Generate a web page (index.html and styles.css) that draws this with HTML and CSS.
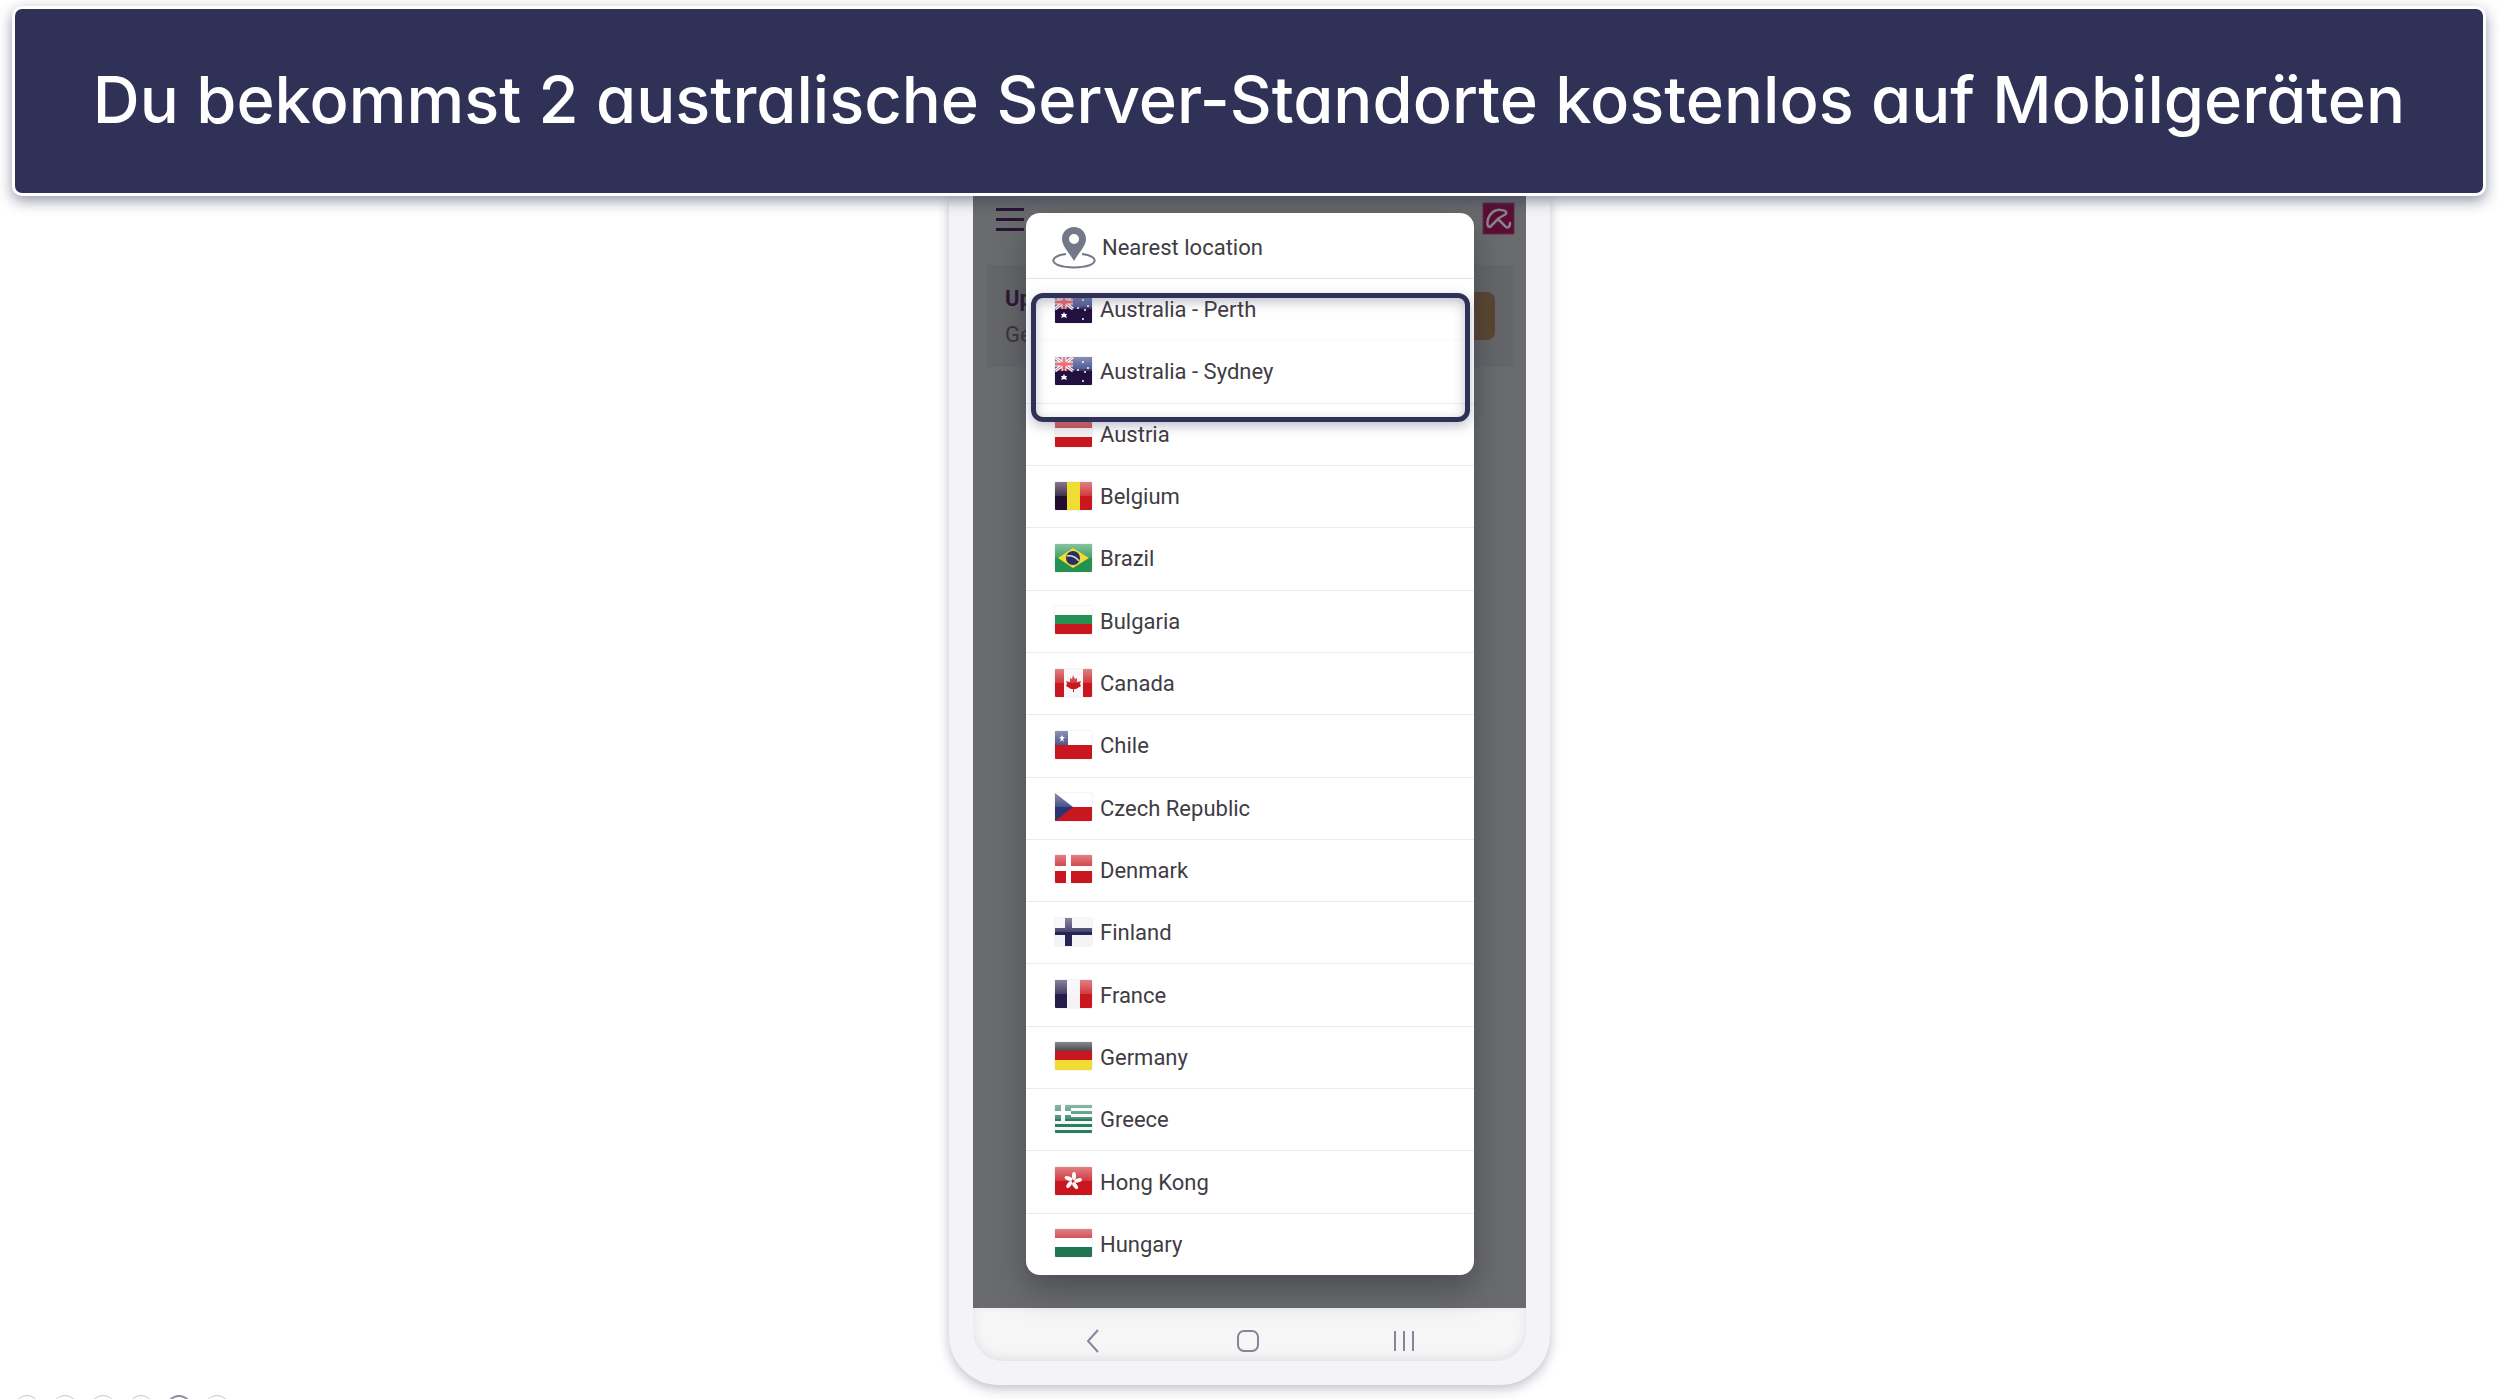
FILE: index.html
```html
<!DOCTYPE html>
<html lang="de">
<head>
    <meta charset="UTF-8">
    <meta name="viewport" content="width=device-width, initial-scale=1.0">
    <title>Server-Standorte</title>
    <link rel="stylesheet" href="styles.css">
</head>
<body>
    <!-- Banner -->
    <header class="banner">
        <h1>Du bekommst 2 australische Server-Standorte kostenlos auf Mobilgeräten</h1>
    </header>

    <!-- Phone -->
    <main class="phone">
        <div class="screen">
            <div class="app-bar">
                <button class="menu-button" aria-label="Menu"><span></span><span></span><span></span></button>
                <svg class="umbrella" viewBox="0 0 33 33" aria-hidden="true">
                    <rect x="1" y="1" width="31" height="31" fill="#5c0c35" stroke="#5b3340"/>
                    <path d="M8 25 C5 25 5 21 6 17 C8 11 13 7 19 8 C23 8 25 10 24 12 L17 16 L8 25 M16 17 L22 23 C25 27 28 26 28 21" fill="none" stroke="#85868a" stroke-width="2.500" stroke-linejoin="round" stroke-linecap="round"/>
                </svg>
            </div>
            <div class="upgrade">
                <div>
                    <strong>Upgrade</strong>
                    <p>Get Pro</p>
                </div>
                <button class="upgrade-button" aria-label="Upgrade"></button>
            </div>

            <!-- Location list -->
            <section class="locations">
                <button class="nearest">
                    <svg class="pin" viewBox="0 0 44 42" aria-hidden="true">
                        <path d="M14 27 C-4 29 -4 40 22 40.500 C48 40 48 29 30 27" fill="none" stroke="#757888" stroke-width="2"/>
                        <path fill-rule="evenodd" d="M22 0 C15 0 10 5 10 12 C10 19 16 24 22 34 C28 24 34 19 34 12 C34 5 29 0 22 0 Z M22 7 A5 5 0 1 1 22 17 A5 5 0 1 1 22 7 Z" fill="#757888"/>
                    </svg>
                    Nearest location
                </button>
                <ul class="country-list">
                    <li><button><svg class="flag" viewBox="0 0 37 28"><use href="#flag-au"/><rect width="37" height="14" fill="url(#gloss)"/></svg>Australia - Perth</button></li>
                    <li><button><svg class="flag" viewBox="0 0 37 28"><use href="#flag-au"/><rect width="37" height="14" fill="url(#gloss)"/></svg>Australia - Sydney</button></li>
                    <li><button><svg class="flag" viewBox="0 0 37 28"><path fill="#c8171e" d="M0 0h37v28H0z"/><path fill="#f2f2f4" d="M0 9h37v9H0z"/><rect width="37" height="14" fill="url(#gloss)"/></svg>Austria</button></li>
                    <li><button><svg class="flag" viewBox="0 0 37 28"><path fill="#220d30" d="M0 0h12v28H0z"/><path fill="#c8171e" d="M25 0h12v28H25z"/><rect width="37" height="14" fill="url(#gloss)"/><path fill="#f0dc32" d="M12 0h13v28H12z"/></svg>Belgium</button></li>
                    <li><button><svg class="flag" viewBox="0 0 37 28"><path fill="#23914f" d="M0 0h37v28H0z"/><rect width="37" height="14" fill="url(#gloss)"/><path fill="#f0dc32" d="M3 14 18 4l16 10-16 10z"/><circle cx="18" cy="14" r="7" fill="#2b2f60"/><path d="M12 12q7-1 12 5" fill="none" stroke="#d8dae4" stroke-width="1.500"/></svg>Brazil</button></li>
                    <li><button><svg class="flag" viewBox="0 0 37 28"><path fill="#fff" d="M0 0h37v9H0z"/><path fill="#23914f" d="M0 9h37v9H0z"/><path fill="#c8171e" d="M0 18h37v10H0z"/></svg>Bulgaria</button></li>
                    <li><button><svg class="flag" viewBox="0 0 37 28"><path fill="#f6f6f8" d="M0 0h37v28H0z"/><path fill="#c8171e" d="M0 0h9v28H0zM28 0h9v28h-9zM18 6l2 4 2-1v4l4-1-1 3 1 2-5 3h-2v3h-1v-3h-2l-5-3 1-2-1-3 4 1V9l2 1z"/><rect width="37" height="14" fill="url(#gloss)"/></svg>Canada</button></li>
                    <li><button><svg class="flag" viewBox="0 0 37 28"><path fill="#fff" d="M0 0h37v14H0z"/><path fill="#c8171e" d="M0 14h37v14H0z"/><path fill="#2c3a7a" d="M0 0h13v14H0z"/><rect width="37" height="14" fill="url(#gloss)"/><path fill="#fff" d="m7 4 1 2h2L8 8l1 3-2-2-2 2 1-3-2-2h2z"/></svg>Chile</button></li>
                    <li><button><svg class="flag" viewBox="0 0 37 28"><path fill="#fff" d="M0 0h37v14H0z"/><path fill="#c8171e" d="M0 14h37v14H0z"/><path fill="#2b3474" d="m0 0 18 14L0 28z"/><rect width="37" height="14" fill="url(#gloss)"/></svg>Czech Republic</button></li>
                    <li><button><svg class="flag" viewBox="0 0 37 28"><path fill="#c8171e" d="M0 0h37v28H0z"/><path fill="#fff" d="M11 0h5v28h-5zM0 11h37v5H0z"/><rect width="37" height="14" fill="url(#gloss)"/></svg>Denmark</button></li>
                    <li><button><svg class="flag" viewBox="0 0 37 28"><path fill="#f4f4f7" d="M0 0h37v28H0z"/><path fill="#262456" d="M10 0h7v28h-7zM0 10h37v7H0z"/><rect width="37" height="14" fill="url(#gloss)"/></svg>Finland</button></li>
                    <li><button><svg class="flag" viewBox="0 0 37 28"><path fill="#241c4a" d="M0 0h12v28H0z"/><path fill="#f4f4f7" d="M12 0h13v28H12z"/><path fill="#c8171e" d="M25 0h12v28H25z"/><rect width="37" height="14" fill="url(#gloss)"/></svg>France</button></li>
                    <li><button><svg class="flag" viewBox="0 0 37 28"><path fill="#2a2a30" d="M0 0h37v9H0z"/><path fill="#c8171e" d="M0 9h37v9H0z"/><path fill="#f0dc32" d="M0 18h37v10H0z"/><rect width="37" height="9" fill="url(#gloss)"/></svg>Germany</button></li>
                    <li><button><svg class="flag" viewBox="0 0 37 28"><path fill="#f6f8f8" d="M0 0h37v28H0z"/><path fill="#2a7d60" d="M0 0h37v3H0zM0 6h37v3H0zM0 12h37v4H0zM0 19h37v3H0zM0 25h37v3H0zM0 0h16v16H0z"/><path fill="#fff" d="M6 0h4v16H6zM0 6h16v4H0z"/><rect width="37" height="14" fill="url(#gloss)"/></svg>Greece</button></li>
                    <li><button><svg class="flag" viewBox="0 0 37 28"><path fill="#c8171e" d="M0 0h37v28H0z"/><rect width="37" height="14" fill="url(#gloss)"/><g fill="#fff"><ellipse cx="19" cy="9" rx="2" ry="4"/><ellipse cx="19" cy="9" rx="2" ry="4" transform="rotate(72 18 14)"/><ellipse cx="19" cy="9" rx="2" ry="4" transform="rotate(144 18 14)"/><ellipse cx="19" cy="9" rx="2" ry="4" transform="rotate(216 18 14)"/><ellipse cx="19" cy="9" rx="2" ry="4" transform="rotate(288 18 14)"/></g></svg>Hong Kong</button></li>
                    <li><button><svg class="flag" viewBox="0 0 37 28"><path fill="#c8171e" d="M0 0h37v9H0z"/><path fill="#fff" d="M0 9h37v9H0z"/><path fill="#217553" d="M0 18h37v10H0z"/><rect width="37" height="14" fill="url(#gloss)"/></svg>Hungary</button></li>
                </ul>
                <div class="highlight"></div>
            </section>
        </div>

        <!-- Android buttons -->
        <nav class="nav-bar">
            <button aria-label="Back"><svg viewBox="0 0 24 24"><path d="M17 1 7 12l10 11"/></svg></button>
            <button aria-label="Home"><svg viewBox="0 0 24 24"><rect x="2" y="2" width="20" height="20" rx="6"/></svg></button>
            <button aria-label="Recents"><svg viewBox="0 0 24 24"><path d="M3 2v20M12 2v20M21 2v20"/></svg></button>
        </nav>
    </main>

    <!-- Slider dots -->
    <footer class="dots">
        <button aria-label="1"></button>
        <button aria-label="2"></button>
        <button aria-label="3"></button>
        <button aria-label="4"></button>
        <button class="active" aria-label="5"></button>
        <button aria-label="6"></button>
    </footer>

    <!-- Shared flag parts -->
    <svg class="defs" aria-hidden="true">
        <defs>
            <linearGradient id="gloss" x1="0" y1="0" x2="0" y2="1">
                <stop offset="0" stop-color="#fff" stop-opacity="0.45"/>
                <stop offset="1" stop-color="#fff" stop-opacity="0.15"/>
            </linearGradient>
            <g id="flag-au">
                <path fill="#221040" d="M0 0h37v28H0z"/>
                <path fill="#24357e" d="M0 0h37v12H0z"/>
                <path stroke="#fff" stroke-width="3" d="m0 0 18 14M18 0 0 14"/>
                <path stroke="#fff" stroke-width="5" d="M9 0v14M0 7h18"/>
                <path stroke="#e0303a" stroke-width="1" d="m0 0 18 14M18 0 0 14"/>
                <path stroke="#e0303a" stroke-width="3" d="M9 0v14M0 7h18"/>
                <path fill="#fff" d="m9 17 1 2h2l-1 2 1 2-3-1-3 1 1-2-1-2h2z"/>
                <circle cx="28" cy="5" r="1" fill="#fff"/>
                <circle cx="23" cy="13" r="1" fill="#fff"/>
                <circle cx="33" cy="11" r="1" fill="#fff"/>
                <circle cx="30" cy="15" r="1" fill="#fff"/>
                <circle cx="28" cy="24" r="1" fill="#fff"/>
            </g>
        </defs>
    </svg>
</body>
</html>
```
FILE: styles.css
```css
* {
    margin: 0;
    padding: 0;
    box-sizing: border-box;
}

body {
    display: flex;
    flex-direction: column;
    height: 100vh;
    overflow: hidden;
    font-family: Roboto, sans-serif;
    font-size: 22px;
    color: #403c44;
    background: #fff;
}

button {
    font: inherit;
    color: inherit;
    border: none;
    background: none;
    cursor: pointer;
}

/* Banner */
.banner {
    position: relative;
    z-index: 2;
    margin: 6px 13px 0 12px;
    padding: 45px 20px 47px;
    text-align: center;
    color: #fff;
    background: #2f3157;
    border: 3px solid #fff;
    border-radius: 10px;
    box-shadow: 0 5px 14px rgba(47, 49, 87, 0.5);
}

.banner h1 {
    font-family: Inter, sans-serif;
    font-size: 65px;
    font-weight: 500;
    line-height: 92px;
    font-feature-settings: "cv11";
    white-space: nowrap;
}

/* Phone */
.phone {
    flex: 1;
    display: flex;
    flex-direction: column;
    width: 601px;
    min-height: 0;
    margin: 0 auto 10px;
    padding: 0 24px 24px;
    background: #f4f4f7;
    border-radius: 0 0 50px 50px;
    box-shadow: 0 4px 12px rgba(47, 49, 87, 0.3);
}

.screen {
    position: relative;
    flex: 1;
    min-height: 0;
    background: #6a6b6d;
}

.app-bar {
    display: flex;
    justify-content: space-between;
    padding: 6px 11px 0 23px;
}

.menu-button {
    display: flex;
    flex-direction: column;
    gap: 7px;
    width: 28px;
    padding-top: 6px;
}

.menu-button span {
    height: 3px;
    background: #281332;
}

.umbrella {
    width: 33px;
    height: 33px;
}

.upgrade {
    display: flex;
    justify-content: space-between;
    align-items: center;
    height: 102px;
    margin: 30px 12px 0 14px;
    padding: 0 19px 0 18px;
    color: #3a3534;
    background: #646669;
}

.upgrade strong {
    color: #2a1638;
}

.upgrade p {
    margin-top: 11px;
}

.upgrade-button {
    width: 120px;
    height: 48px;
    border-radius: 8px;
    background: #5a4530;
}

/* Location list */
.locations {
    position: absolute;
    top: 17px;
    right: 52px;
    bottom: 33px;
    left: 53px;
    display: flex;
    flex-direction: column;
    background: #fff;
    border-radius: 14px;
    box-shadow: 0 14px 30px rgba(47, 49, 60, 0.5);
}

.nearest {
    display: flex;
    align-items: center;
    gap: 6px;
    height: 66px;
    padding: 4px 0 0 26px;
    border-bottom: 1px solid #e4e4e8;
}

.pin {
    width: 44px;
    height: 42px;
}

.country-list {
    flex: 1;
    display: flex;
    flex-direction: column;
    list-style: none;
}

.country-list li {
    flex: 1;
    display: flex;
    border-bottom: 1px solid #ebebee;
}

.country-list li:first-child {
    border-color: #fafafa;
}

.country-list li:last-child {
    border-bottom: none;
}

.country-list button {
    flex: 1;
    display: flex;
    align-items: center;
    gap: 8px;
    padding-left: 29px;
}

.flag {
    width: 37px;
    height: 28px;
    margin-bottom: 2px;
    border-radius: 1px;
    box-shadow: 0 0 1px #8c8c98;
}

.highlight {
    position: absolute;
    top: 80px;
    right: 4px;
    left: 5px;
    height: 129px;
    border: 5px solid #2f3157;
    border-radius: 12px;
    box-shadow: 0 4px 12px rgba(47, 49, 87, 0.3), inset 0 4px 12px rgba(47, 49, 87, 0.3);
    pointer-events: none;
}

/* Android buttons */
.nav-bar {
    display: flex;
    justify-content: space-around;
    align-items: center;
    height: 53px;
    padding: 12px 44px 0 42px;
    background: #f6f6f7;
    border-radius: 0 0 30px 30px;
    box-shadow: inset 0 -3px 10px rgba(47, 49, 87, 0.1);
}

.nav-bar button {
    width: 24px;
    height: 24px;
}

.nav-bar svg {
    display: block;
    width: 24px;
    height: 24px;
    fill: none;
    stroke: #85869b;
    stroke-width: 2;
}

/* Slider dots */
.dots {
    display: flex;
    gap: 12px;
    height: 4px;
    padding-left: 14px;
    overflow: hidden;
}

.dots button {
    flex: none;
    width: 26px;
    height: 26px;
    border: 1px solid #c4c4ce;
    border-radius: 50%;
}

.dots .active {
    border: 2px solid #8d8da2;
}

.defs {
    position: absolute;
    width: 0;
    height: 0;
}
```
